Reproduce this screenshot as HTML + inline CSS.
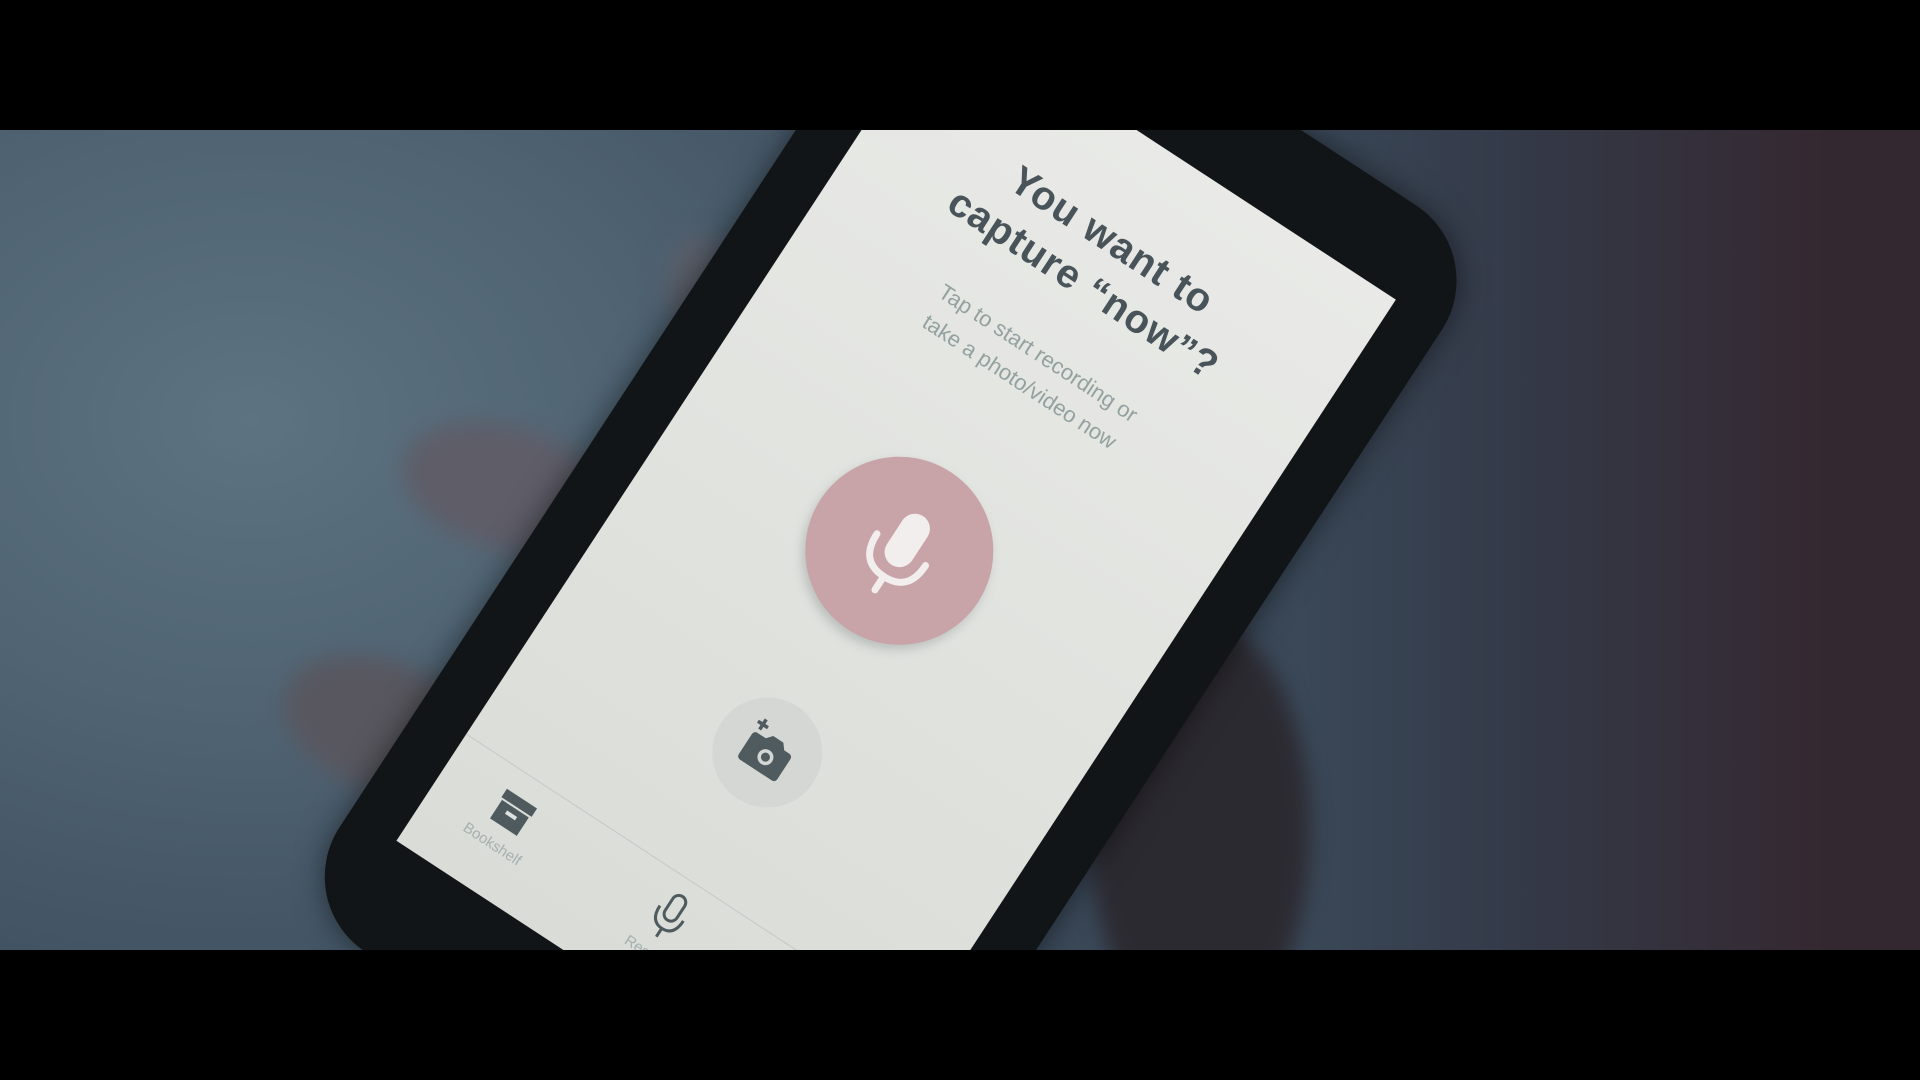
<!DOCTYPE html>
<html><head><meta charset="utf-8"><style>
html,body{margin:0;padding:0;width:1920px;height:1080px;overflow:hidden;background:#000}
.scene{position:absolute;left:0;top:0;width:1920px;height:1080px;overflow:hidden;
background:radial-gradient(ellipse 1000px 750px at 250px 420px,#5d7381 0%,#4f6373 40%,#425363 75%,#3a4858 100%),#333;}
.rightdark{position:absolute;left:1300px;top:0;width:620px;height:1080px;background:linear-gradient(90deg,rgba(58,70,86,0),rgba(50,54,68,.8) 35%,rgba(52,38,46,.95) 85%)}
.blob{position:absolute;border-radius:50%;filter:blur(12px)}
.phone{position:absolute;left:944px;top:4px;transform-origin:0 0;transform:rotate(33.2deg);width:540px;height:1000px}
.body{position:absolute;left:-55px;top:-90px;width:650px;height:1200px;border-radius:90px;background:#121518;box-shadow:0 0 30px rgba(0,0,0,.5)}
.screen{position:absolute;left:0;top:0;width:540px;height:1000px;background:linear-gradient(180deg,#e9eae7 0%,#e1e3df 50%,#d9dcd7 100%);overflow:hidden;font-family:"Liberation Sans",sans-serif}
.t{position:absolute;left:0;width:540px;text-align:center}
.title{font-size:40px;font-weight:bold;color:#49545a;letter-spacing:1px}
.sub{font-size:22px;color:#93a1a0}
.mic{position:absolute;left:168px;top:388px;width:188px;height:188px;border-radius:50%;background:#c8a3a8;box-shadow:0 6px 10px rgba(120,130,130,.35)}
.cam{position:absolute;left:207px;top:668px;width:110px;height:110px;border-radius:50%;background:#d4d7d3}
.tabline{position:absolute;left:0;top:872px;width:540px;height:1px;background:#c6cac6}
.lbl{position:absolute;font-size:15px;color:#a6b0b0;width:140px;text-align:center}
.bar{position:absolute;left:0;width:1920px;background:#000}
</style></head><body>
<div class="scene">
<div class="rightdark"></div>
<!-- fingers left -->
<div class="blob" style="left:400px;top:425px;width:210px;height:125px;background:#5e5d68;transform:rotate(15deg)"></div>
<div class="blob" style="left:280px;top:660px;width:200px;height:130px;background:#58575f;transform:rotate(20deg)"></div>
<div class="blob" style="left:665px;top:235px;width:70px;height:100px;background:#5a5f6a"></div>
<!-- thumb right -->
<div class="blob" style="left:1090px;top:620px;width:220px;height:420px;background:#2c2a31;filter:blur(10px)"></div>
<div class="phone">
<div class="body"></div>
<div class="screen">
<div class="t title" style="top:84px">You want to</div>
<div class="t title" style="top:136px">capture “now”?</div>
<div class="t sub" style="top:228px">Tap to start recording or</div>
<div class="t sub" style="top:262px">take a photo/video now</div>
<div class="mic">
<svg width="188" height="188" viewBox="0 0 188 188">
<rect x="80" y="52" width="30" height="58" rx="15" fill="#f2eeee"/>
<path d="M66 92 Q66 124 95 124 Q124 124 124 92" fill="none" stroke="#f2eeee" stroke-width="7" stroke-linecap="round"/>
<line x1="95" y1="124" x2="95" y2="140" stroke="#f2eeee" stroke-width="7" stroke-linecap="round"/>
</svg></div>
<div class="cam">
<svg width="110" height="110" viewBox="0 0 110 110">
<path d="M36 44 h10 l5 -6 h12 l5 6 h6 a4 4 0 0 1 4 4 v24 a4 4 0 0 1 -4 4 h-38 a4 4 0 0 1 -4 -4 v-24 a4 4 0 0 1 4 -4z" fill="#505b5f"/>
<circle cx="56" cy="60" r="8" fill="#d4d7d3"/><circle cx="56" cy="60" r="4.5" fill="#505b5f"/>
<path d="M36 28 v12 M30 34 h12" stroke="#505b5f" stroke-width="3.5"/>
</svg></div>
<div class="tabline"></div>
<svg style="position:absolute;left:60px;top:890px" width="44" height="44" viewBox="0 0 44 44">
<rect x="4" y="6" width="36" height="10" fill="#4e5a5e"/><rect x="6" y="18" width="32" height="22" fill="#4e5a5e"/><rect x="16" y="24" width="12" height="4" fill="#dfe1de"/></svg>
<div class="lbl" style="left:12px;top:942px">Bookshelf</div>
<svg style="position:absolute;left:248px;top:886px" width="44" height="56" viewBox="0 0 44 56">
<rect x="15" y="4" width="14" height="28" rx="7" fill="none" stroke="#4e5a5e" stroke-width="3"/>
<path d="M8 24 Q8 42 22 42 Q36 42 36 24" fill="none" stroke="#4e5a5e" stroke-width="3"/><line x1="22" y1="42" x2="22" y2="52" stroke="#4e5a5e" stroke-width="3"/></svg>
<div class="lbl" style="left:200px;top:948px">Record</div>
</div>
</div>
</div>
<div class="bar" style="top:0;height:130px"></div>
<div class="bar" style="top:950px;height:130px"></div>
</body></html>
